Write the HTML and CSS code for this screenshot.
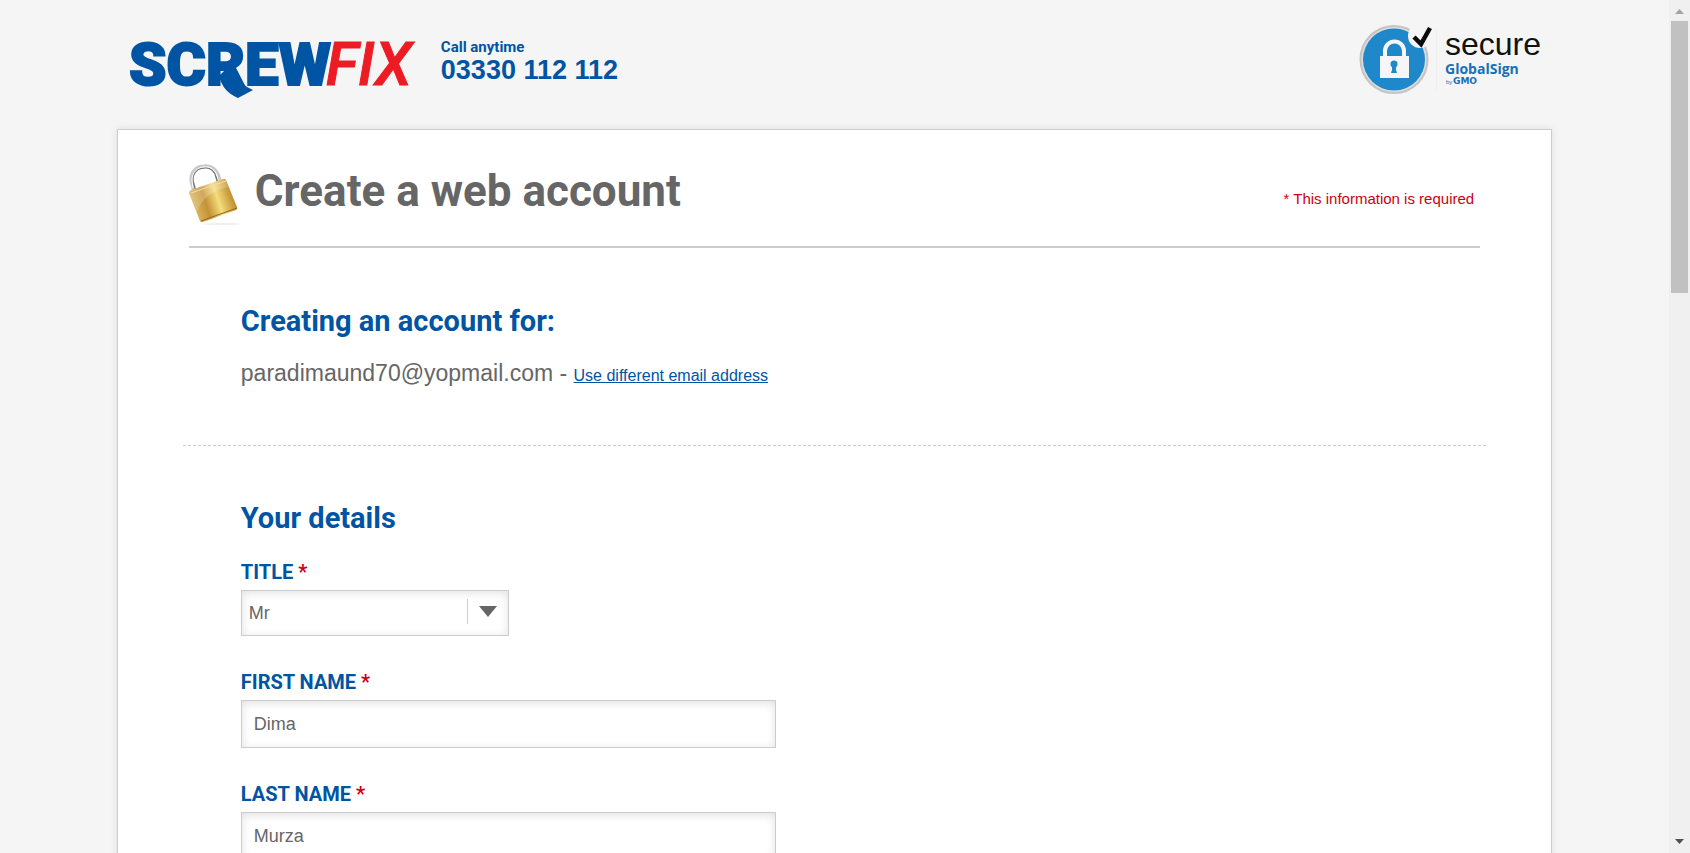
FILE: index.html
```html
<!DOCTYPE html>
<html lang="en">
<head>
<meta charset="utf-8">
<title>Create a web account</title>
<link rel="stylesheet" href="styles.css">
</head>
<body>
<div class="window">
  <div class="page">
    <header class="site-header">
      <svg class="brand" width="288" height="62" viewBox="0 0 288 62" role="img" aria-label="Screwfix">
        <text class="brand-main" x="0" y="45">SCREW</text>
        <path class="brand-tail" d="M96 30L108 32Q112 46 124 50L109 58Q94 52 90 36Z"/>
        <text class="brand-accent" x="197" y="45">FIX</text>
      </svg>
      <div class="phone">
        <span class="phone-label">Call anytime</span>
        <strong class="phone-number">03330 112 112</strong>
      </div>
      <svg class="seal" width="184" height="72" viewBox="0 0 184 72" role="img" aria-label="Secure GlobalSign">
        <circle cx="36" cy="35.500" r="33.500" fill="#ddd" stroke="#c4c4c4" stroke-width="2"/>
        <circle cx="36" cy="35.500" r="31" fill="#1e88cb"/>
        <circle cx="62" cy="12" r="12" fill="#f5f5f5"/>
        <path d="M56 13L63 20L72 4" fill="none" stroke="#0a0a0a" stroke-width="4.500"/>
        <path d="M27 32V27a9.500 9.500 0 0 1 19 0v6" fill="none" stroke="#f6f6f6" stroke-width="4"/>
        <rect x="22" y="32" width="29" height="22" fill="#f6f6f6"/>
        <circle cx="36" cy="40" r="3.500" fill="#1e88cb"/>
        <path d="M34 39h4v7l1 3h-6l1-3z" fill="#1e88cb"/>
        <path d="M78.500 5v62" stroke="#eee"/>
        <text class="seal-secure" x="87" y="31">secure</text>
        <text class="seal-name" x="87" y="50">GlobalSign</text>
        <text class="seal-by" x="88" y="60">by</text>
        <text class="seal-gmo" x="95" y="60">GMO</text>
      </svg>
    </header>

    <main class="card">
      <div class="title-row">
        <svg class="padlock" width="53" height="62" viewBox="0 0 53 62" aria-hidden="true">
          <defs>
            <linearGradient id="gold" x1="0" y1=".3" x2="1" y2="0">
              <stop offset="0" stop-color="#d9b55c"/>
              <stop offset=".25" stop-color="#c59236"/>
              <stop offset=".5" stop-color="#f4dc7c"/>
              <stop offset=".75" stop-color="#c99a3c"/>
              <stop offset="1" stop-color="#a87420"/>
            </linearGradient>
          </defs>
          <ellipse cx="33" cy="60" rx="19" ry="1" fill="#eee"/>
          <path d="M5 28L2 17C1 7 8 2 15 2C23 1 28 6 30 12L32 20" fill="none" stroke="#c9c9c9" stroke-width="3"/>
          <path d="M7 28L4 17C3 9 9 4 15 4C22 3 26 8 27 13L29 20" fill="none" stroke="#777" stroke-width="1.500"/>
          <path d="M4 24L3 16C3 8 9 3 15 3C22 2 27 7 28 12" fill="none" stroke="#fff"/>
          <path d="M0 29Q0 27 2 26L34 15Q36 14 37 16L48 43Q49 45 47 46L14 58Q12 59 11 57Z" fill="url(#gold)"/>
          <path d="M0 29Q0 27 2 26L34 15Q36 14 37 16L39 23Q15 28 8 48Z" fill="#fff" opacity=".2"/>
          <path d="M2 29L37 17" stroke="#f3dda0" fill="none"/>
          <path d="M12 57L48 44" stroke="#94661d" fill="none"/>
        </svg>
        <h1 class="title">Create a web account</h1>
        <p class="required-note">* This information is required</p>
      </div>

      <section class="section section-email">
        <h2 class="section-title">Creating an account for:</h2>
        <p class="email">paradimaund70@yopmail.com - <a class="email-link" href="#">Use different email address</a></p>
      </section>

      <form class="section section-details">
        <h2 class="section-title">Your details</h2>
        <div class="field">
          <label class="label" for="title">TITLE <span class="star">*</span></label>
          <div class="select-box">
            <select class="control select" id="title"><option>Mr</option><option>Mrs</option><option>Miss</option><option>Ms</option></select>
            <svg class="select-arrow" width="32" height="26" viewBox="0 0 32 26" aria-hidden="true"><path d="M.500 0v25" stroke="#ccc"/><path d="M12 7H30L21 18Z" fill="#666"/></svg>
          </div>
        </div>
        <div class="field">
          <label class="label" for="first-name">FIRST NAME <span class="star">*</span></label>
          <input class="control input" id="first-name" type="text" value="Dima">
        </div>
        <div class="field">
          <label class="label" for="last-name">LAST NAME <span class="star">*</span></label>
          <input class="control input" id="last-name" type="text" value="Murza">
        </div>
      </form>
    </main>
  </div>

  <div class="scrollbar" aria-hidden="true">
    <svg width="9" height="5" viewBox="0 0 9 5"><path d="M0 5L4.500 0L9 5Z" fill="#a3a3a3"/></svg>
    <div class="track"><div class="thumb"></div></div>
    <svg width="9" height="5" viewBox="0 0 9 5"><path d="M0 0L4.500 5L9 0Z" fill="#505050"/></svg>
  </div>
</div>
</body>
</html>
```
FILE: styles.css
```css
* {
  box-sizing: border-box;
}

body {
  margin: 0;
  background: #f5f5f5;
  color: #666;
  font-family: "Liberation Sans", Arial, sans-serif;
}

h1, h2, p {
  margin: 0;
}

.window {
  display: flex;
  height: 100vh;
}

.page {
  flex: 1;
  overflow: hidden;
}

.site-header,
.card {
  width: 86%;
  margin: 0 auto;
}

.site-header {
  display: flex;
  align-items: flex-start;
  padding: 24px 10px 27px 12px;
}

.brand {
  margin-top: 16px;
  overflow: visible;
}

.brand-main {
  font: 900 60px Roboto, sans-serif;
  fill: #0054a4;
  stroke: #0054a4;
  stroke-width: 2px;
}

.brand-tail {
  fill: #0054a4;
}

.brand-accent {
  font: italic 500 60px Roboto, sans-serif;
  fill: #ed1c24;
  stroke: #ed1c24;
  stroke-width: 1px;
}

.phone {
  display: flex;
  flex-direction: column;
  margin: 13px auto 0 24px;
  color: #0054a4;
}

.phone-label {
  font: bold 15px/20px Roboto, sans-serif;
}

.phone-number {
  font-size: 27px;
  line-height: 26px;
}

.seal-secure {
  font: 32px "Liberation Sans", sans-serif;
  fill: #111;
}

.seal-name {
  font: bold 14px "Open Sans", sans-serif;
  fill: #1670b8;
}

.seal-by {
  font: 6px "Liberation Sans", sans-serif;
  fill: #1670b8;
}

.seal-gmo {
  font: bold 9px "DejaVu Sans", sans-serif;
  fill: #1670b8;
}

.card {
  padding: 34px 65px;
  background: #fff;
  border: 1px solid #ccc;
  box-shadow: 0 0 8px rgba(0, 0, 0, 0.1);
}

.title-row {
  display: flex;
  align-items: flex-start;
  margin: 0 6px;
  padding-bottom: 20px;
  border-bottom: 2px solid #ccc;
}

.title {
  margin: -2px 0 0 13px;
  font: bold 44px/58px Roboto, sans-serif;
}

.required-note {
  margin: 26px 6px 0 auto;
  color: #cc0011;
  font-size: 15px;
  line-height: 18px;
}

.section {
  padding: 53px 58px;
}

.section-details {
  padding-top: 52px;
}

.section-email {
  border-bottom: 1px dashed #ccc;
}

.section-title {
  color: #0054a4;
  font: bold 29px/40px Roboto, sans-serif;
}

.email {
  margin-top: 16px;
  font-size: 23px;
  line-height: 32px;
}

.email-link {
  color: #0054a4;
  font-size: 16px;
}

.field {
  margin-bottom: 32px;
}

.section-title + .field {
  margin-top: 20px;
}

.label {
  display: block;
  margin-bottom: 4px;
  color: #0054a4;
  font: bold 20px/28px Roboto, sans-serif;
}

.star {
  color: #cc0011;
}

.control {
  display: block;
  width: 100%;
  height: 48px;
  border: 1px solid #ccc;
  border-radius: 0;
  background: #fff;
  color: #666;
  font: 18px "Liberation Sans", sans-serif;
  box-shadow: inset 0 2px 10px rgba(0, 0, 0, 0.12);
}

.input {
  max-width: 535px;
  padding: 0 12px;
}

.select-box {
  position: relative;
  max-width: 268px;
}

.select {
  height: 46px;
  padding: 0 44px 0 7px;
  appearance: none;
}

.select-arrow {
  position: absolute;
  top: 9px;
  right: 10px;
  pointer-events: none;
}

.scrollbar {
  display: flex;
  flex-direction: column;
  align-items: center;
  gap: 7px;
  width: 21px;
  padding: 9px 2px;
  background: #f0f0f0;
}

.track {
  flex: 1;
  width: 100%;
}

.thumb {
  height: 33.5%;
  background: #c1c1c1;
}
```
